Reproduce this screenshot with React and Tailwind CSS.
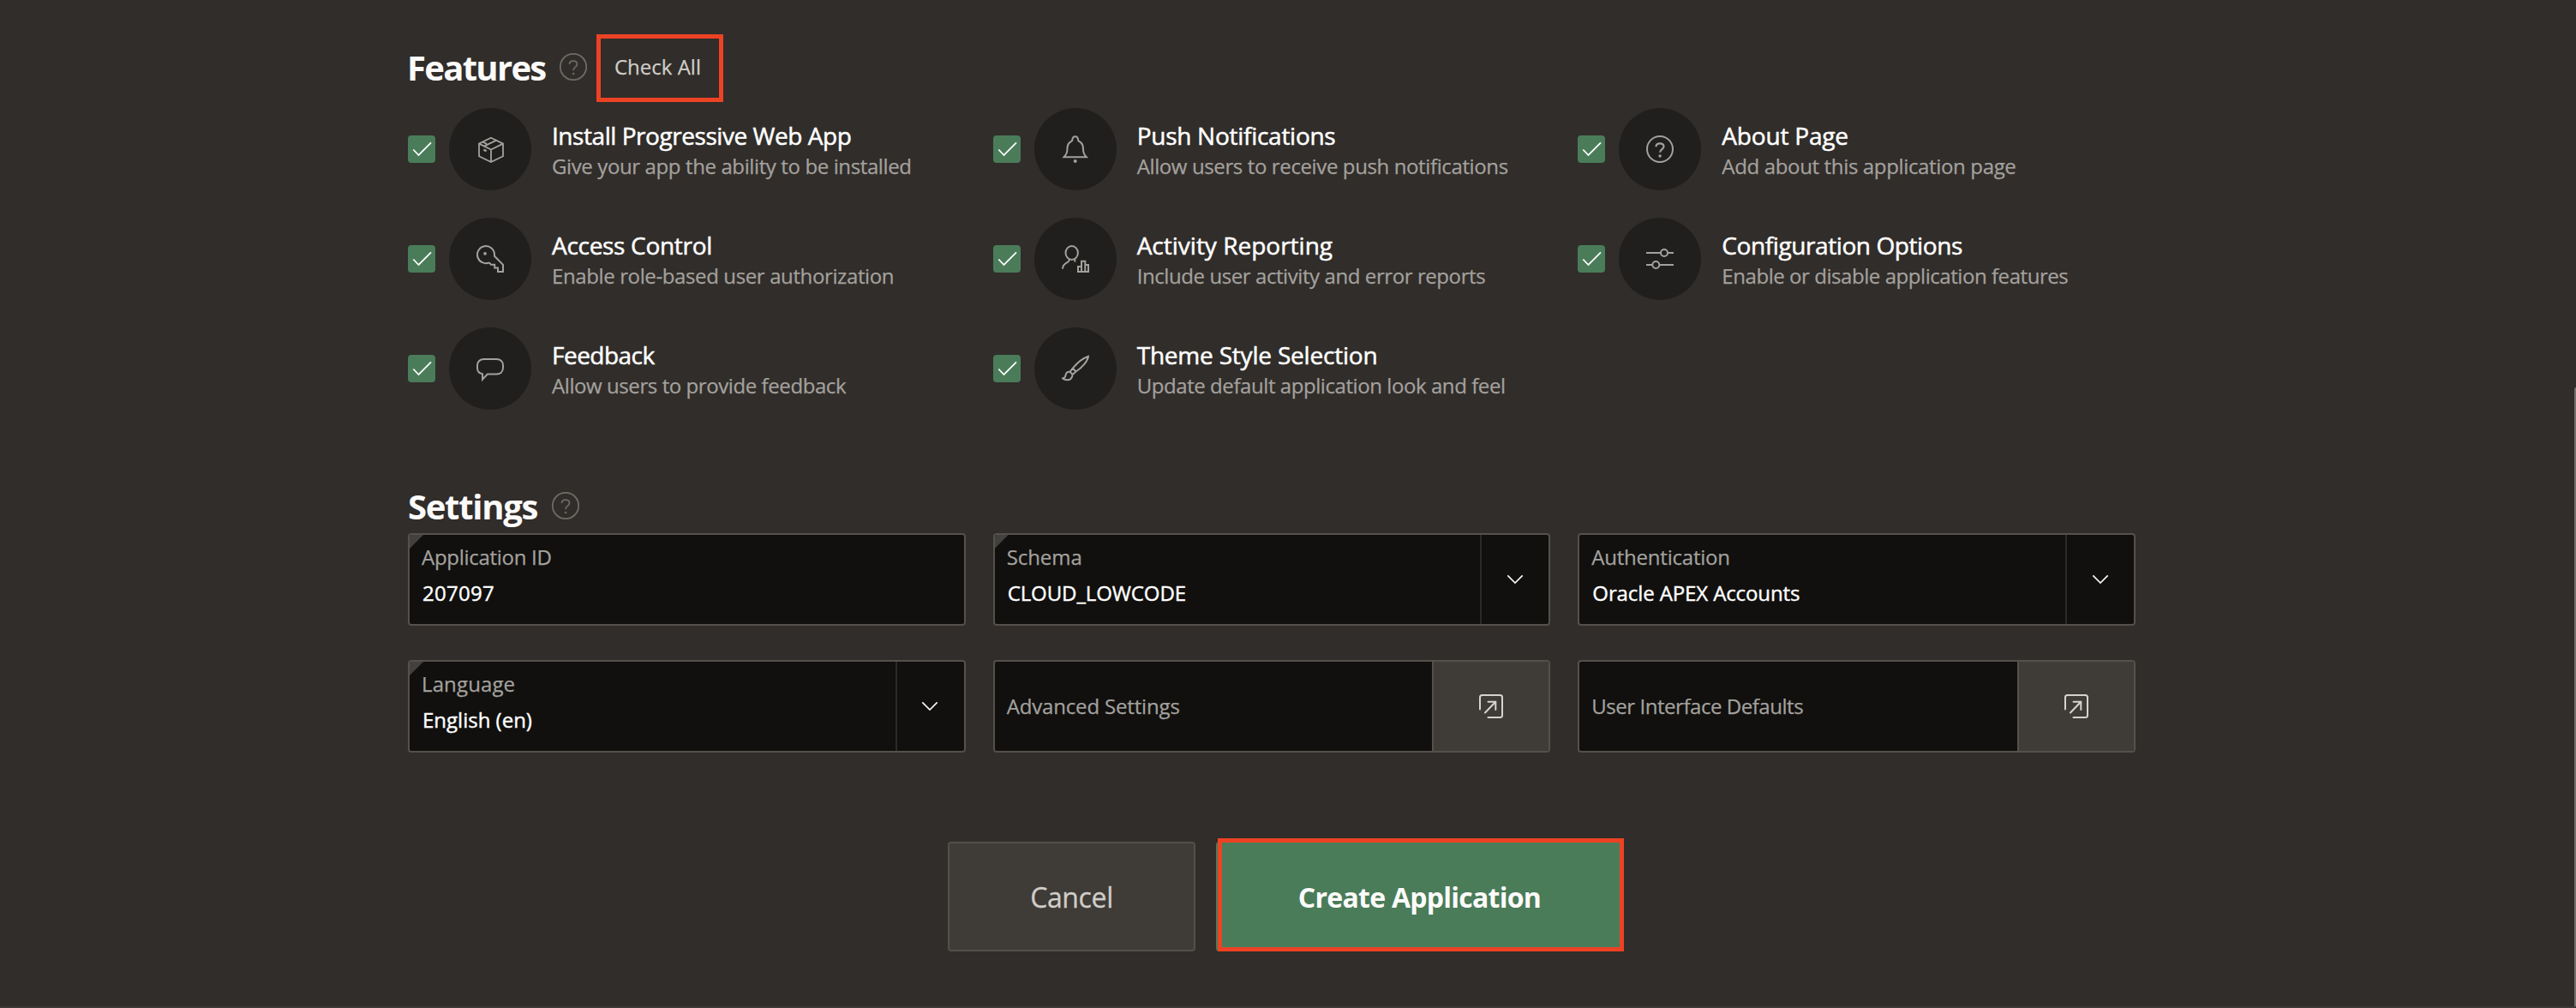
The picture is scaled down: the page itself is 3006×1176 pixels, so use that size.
import React from "react";

function Svg({ children, className = "" }) {
  return (
    <svg
      viewBox="0 0 32 32"
      fill="none"
      stroke="currentColor"
      strokeWidth="2"
      className={"block h-8 w-8 shrink-0 " + className}
    >
      {children}
    </svg>
  );
}

const BoxIcon = () => (
  <Svg>
    <path d="M17 2.800 31 9.600v14.600l-14 6.800-14-6.800V9.600z M3 9.600l14 7 14-7 M17 16.600V31 M9.300 12.400 23.400 5.600 M7.600 7.700 12 9.900" strokeWidth="1.800" />
    <path d="M8.400 16.600l3.200 1.600" strokeWidth="2.400" />
  </Svg>
);

const KeyIcon = () => (
  <Svg>
    <path d="M15 20.300A10 10 0 1 1 21 11v1.800L31 22.800V31h-6v-4.400h-3.800v-3.800H17l-2-2.500" />
    <circle cx="10" cy="9.800" r="1.900" fill="currentColor" stroke="none" />
  </Svg>
);

const ChatIcon = () => (
  <Svg>
    <path d="M7 28.700V22.300C3.500 21.500 1 18.800 1 15.500v-3C1 8 4.200 5 8.500 5h15C28 5 31 8 31 12.500v2.500c0 4.500-3 7.500-7.500 7.500H12.800z" />
  </Svg>
);

const BellIcon = () => (
  <Svg>
    <path d="M2.600 25.200h26.200c-2.300-2.400-3.800-5-3.800-8.700 0-4.500-.6-7.300-5.700-10.300-.2-3.200-1.300-5-3.600-5s-3.400 1.800-3.600 5C7 9.200 6.400 12 6.400 16.500c0 3.700-1.500 6.300-3.800 8.700z" />
    <circle cx="15.700" cy="30" r="2" fill="currentColor" stroke="none" />
  </Svg>
);

const UserChartIcon = () => (
  <Svg>
    <ellipse cx="11.700" cy="9" rx="7.200" ry="8" />
    <path d="M8.700 16.300v1.200c0 3.500-7.700 2.500-7.700 10.200 M15.300 16.300v3.200" />
    <path d="M19 31v-6h4v6z M23 31V18.800h4.300V31z M27.300 31v-8H31v8z" />
  </Svg>
);

const BrushIcon = () => (
  <Svg>
    <path d="M31 1.800C30.200 7 24.500 14.500 16.600 19.500l-3.800-3.900C18.200 9.200 25 3.800 31 1.800z M12.800 15.600l-3.300 4.200 3 3.100 4.100-3.400 M9.500 19.800c-3.200-.3-4.600 1.400-5 4-.3 2-1.500 3.300-3.600 3.600 3.200 2.400 7.600 2.500 9.800.300 1.400-1.400 1.900-3 1.800-4.800" />
  </Svg>
);

const SlidersIcon = () => (
  <Svg>
    <circle cx="21" cy="9" r="4" />
    <circle cx="11.300" cy="23" r="4" />
    <path d="M0 9h17 M25 9h7 M0 23h7.300 M15.300 23H32" />
  </Svg>
);

const QuestionIcon = () => (
  <Svg>
    <circle cx="16" cy="16" r="15" />
    <path d="M11.500 13.200c0-2.500 1.900-3.900 4.500-3.900s4.500 1.500 4.500 3.800c0 3-4.400 3.300-4.400 6.700" strokeWidth="2.200" />
    <circle cx="16.100" cy="24" r="1.700" fill="currentColor" stroke="none" />
  </Svg>
);

const HelpIcon = ({ className = "" }) => (
  <Svg className={"text-[#6d6965] " + className}>
    <circle cx="16" cy="16" r="15.200" strokeWidth="1.800" />
    <path d="M11.500 13c0-2.500 1.900-3.800 4.500-3.800s4.500 1.500 4.500 3.800c0 3-4.400 3.300-4.400 6.900" strokeWidth="1.800" />
    <circle cx="16.100" cy="24" r="1.300" fill="currentColor" stroke="none" />
  </Svg>
);

const OpenIcon = () => (
  <Svg className="text-[#d6d3cf]">
    <path d="M3 19.500V5.500C3 4 4 3 5.500 3h21C28 3 29 4 29 5.500v21c0 1.500-1 2.500-2.500 2.500H12.500" strokeLinecap="round" />
    <path d="M9 23.500 21.300 10.700 M12.500 10.700h8.800v9.300" strokeLinecap="round" />
  </Svg>
);

const ChevronIcon = () => (
  <Svg className="-ml-px text-[#f5f4f2]">
    <path d="M7.300 11.300 16 20l8.700-8.700" strokeWidth="1.700" />
  </Svg>
);

const features = [
  { icon: BoxIcon, title: "Install Progressive Web App", tt: "tracking-[-0.45px]", desc: "Give your app the ability to be installed", dt: "tracking-[-0.385px]" },
  { icon: BellIcon, title: "Push Notifications", tt: "tracking-[-0.27px]", desc: "Allow users to receive push notifications", dt: "tracking-[-0.38px]" },
  { icon: QuestionIcon, title: "About Page", tt: "tracking-[-0.19px]", desc: "Add about this application page", dt: "tracking-[-0.348px]" },
  { icon: KeyIcon, title: "Access Control", tt: "tracking-[-0.3px]", desc: "Enable role-based user authorization", dt: "tracking-[-0.38px]" },
  { icon: UserChartIcon, title: "Activity Reporting", tt: "tracking-normal", desc: "Include user activity and error reports", dt: "tracking-[-0.418px]" },
  { icon: SlidersIcon, title: "Configuration Options", tt: "tracking-[-0.41px]", desc: "Enable or disable application features", dt: "tracking-[-0.443px]" },
  { icon: ChatIcon, title: "Feedback", tt: "tracking-[-0.52px]", desc: "Allow users to provide feedback", dt: "tracking-[-0.42px]" },
  { icon: BrushIcon, title: "Theme Style Selection", tt: "tracking-[-0.2px]", desc: "Update default application look and feel", dt: "tracking-[-0.43px]" },
];

const settings = [
  { kind: "text", required: true, label: "Application ID", lt: "tracking-[-0.29px]", value: "207097", vt: "tracking-[0.27px]" },
  { kind: "select", required: true, label: "Schema", lt: "tracking-[-0.07px]", value: "CLOUD_LOWCODE", vt: "tracking-[-0.1px]" },
  { kind: "select", label: "Authentication", lt: "tracking-[-0.22px]", value: "Oracle APEX Accounts", vt: "tracking-[-0.11px]" },
  { kind: "select", required: true, label: "Language", lt: "tracking-[0.13px]", value: "English (en)", vt: "tracking-normal" },
  { kind: "link", label: "Advanced Settings", lt: "tracking-[-0.16px]" },
  { kind: "link", label: "User Interface Defaults", lt: "tracking-[-0.46px]" },
];

function Feature({ icon: Icon, title, tt, desc, dt }) {
  return (
    <div className="flex h-24">
      <span className="mt-8 flex h-8 w-8 shrink-0 rounded bg-[#4a7c59] text-white">
        <Svg>
          <path d="M6.300 16.500 12.500 23 27 8.300" strokeWidth="1.800" />
        </Svg>
      </span>
      <span className="ml-4 flex h-24 w-24 shrink-0 items-center justify-center rounded-full bg-[#201f1d] text-[#a3a19e]">
        <Icon />
      </span>
      <div className="ml-6 pt-[14px] whitespace-nowrap">
        <div className={"text-[28px] leading-9 font-medium text-white [-webkit-text-stroke:0.5px] " + tt}>{title}</div>
        <div className={"mt-px text-2xl leading-[34px] text-[#a3a19e] [-webkit-text-stroke:0.25px] " + dt}>{desc}</div>
      </div>
    </div>
  );
}

function Field({ kind, required, label, lt, value, vt }) {
  return (
    <div className="relative flex h-[108px] overflow-hidden rounded border-2 border-[#55504b] bg-[#11100e]">
      {required && (
        <span className="absolute top-0 left-0 h-4 w-4 bg-[#43413f] [clip-path:polygon(0_0,100%_0,0_100%)]" />
      )}
      {kind === "link" ? (
        <div className="flex flex-1 items-center pl-[14px]">
          <span className={"text-2xl leading-[34px] text-[#a3a19e] [-webkit-text-stroke:0.25px] " + lt}>{label}</span>
        </div>
      ) : (
        <div className="flex-1 pt-[9px] pl-[14px]">
          <div className={"text-2xl leading-[34px] text-[#a3a19e] [-webkit-text-stroke:0.25px] " + lt}>{label}</div>
          <div className={"mt-2 pl-px text-2xl leading-[34px] font-medium text-white [-webkit-text-stroke:0.4px] " + vt}>{value}</div>
        </div>
      )}
      {kind === "select" && (
        <div className="flex w-20 shrink-0 items-center justify-center border-l-2 border-[#2c2a29]">
          <ChevronIcon />
        </div>
      )}
      {kind === "link" && (
        <div className="flex w-[136px] shrink-0 items-center justify-center border-l-2 border-[#55504b] bg-[#3f3b36]">
          <OpenIcon />
        </div>
      )}
    </div>
  );
}

export default function App() {
  return (
    <div className="relative flex h-[1176px] w-full flex-col overflow-hidden border-b-2 border-[#3d3a38] bg-[#312d2a] font-['Open_Sans',sans-serif]">
      <main className="ml-[476px] w-[2016px] pt-10">
        <header className="flex h-[79px] items-start">
          <h2 className="-ml-px w-[178px] shrink-0 text-[40px] leading-[78px] font-bold tracking-[-1.69px] text-[#fcfbfa]">
            Features
          </h2>
          <HelpIcon className="mt-[22px]" />
          <button className="ml-[11px] h-[79px] w-[148px] border-[5px] border-[#ed4224] pb-1 pl-4 text-left text-2xl leading-[64px] whitespace-nowrap text-[#d0cdc9] [-webkit-text-stroke:0.25px]">
            Check All
          </button>
        </header>

        <section className="mt-[7px] grid grid-cols-3 gap-8">
          {features.map((f) => (
            <Feature key={f.title} {...f} />
          ))}
        </section>

        <header className="mt-24 flex h-8 items-center">
          <h2 className="w-[168px] shrink-0 pt-0.5 text-[40px] leading-8 font-bold tracking-[-1.29px] text-[#fcfbfa]">
            Settings
          </h2>
          <HelpIcon />
        </header>

        <section className="mt-4 grid grid-cols-3 gap-x-8 gap-y-10">
          {settings.map((s) => (
            <Field key={s.label} {...s} />
          ))}
        </section>

        <footer className="mt-[104px] ml-[630px] flex gap-6">
          <button className="h-32 w-[289px] rounded border-2 border-[#52504a] bg-[#3f3b36] pt-0.5 text-[32px] tracking-[-0.37px] text-[#d0cdc9] [-webkit-text-stroke:0.3px]">
            Cancel
          </button>
          <button className="relative h-32 w-[475px] rounded bg-[#4a7c59] pt-0.5 text-[32px] font-bold tracking-[-0.74px] text-[#fcfbfa]">
            Create Application
            <span className="absolute -top-1 left-0.5 h-[132px] w-[474px] border-[5px] border-[#ed4224]" />
          </button>
        </footer>
      </main>
      <span className="absolute top-[452px] right-0 h-[724px] w-0.5 rounded-tl bg-[#73706d]" />
    </div>
  );
}
